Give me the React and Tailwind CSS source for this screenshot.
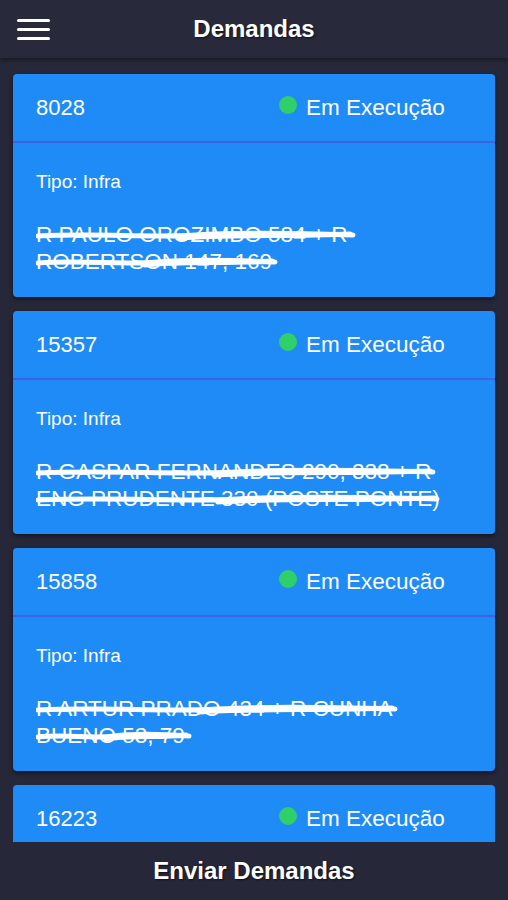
function Scribble({ width, top }) {
  const w = width;
  const d = `M2 6 C ${w * 0.2} 3, ${w * 0.35} 8, ${w * 0.5} 5 S ${w * 0.8} 3, ${w - 3} 5 M${w * 0.45} 8 C ${w * 0.6} 4, ${w * 0.8} 7, ${w - 6} 4`;
  return (
    <svg className="absolute left-0" style={{ top, width: w, height: 12 }} viewBox={`0 0 ${w} 12`} fill="none">
      <path d={d} stroke="white" strokeWidth="5" strokeLinecap="round" />
    </svg>
  );
}

function Header({ id }) {
  return (
    <div className="h-[69px] flex items-center pl-[23px] border-b-2 border-[#3d63e0]">
      <span className="text-white text-[22px] w-[243px]">{id}</span>
      <span className="w-[18px] h-[18px] rounded-full bg-[#2fd06a] -translate-y-[3px]" />
      <span className="text-white text-[22.5px] ml-[9px]">Em Execução</span>
    </div>
  );
}

export default function App() {
  const items = [
    { id: "8028", lines: ["R PAULO OROZIMBO 584 + R", "ROBERTSON 147, 169"], w: [320, 242] },
    { id: "15357", lines: ["R GASPAR FERNANDES 290, 338 + R", "ENG PRUDENTE 330 (POSTE PONTE)"], w: [400, 404] },
    { id: "15858", lines: ["R ARTUR PRADO 434 + R CUNHA", "BUENO 53, 79"], w: [362, 156] },
  ];
  return (
    <div className="h-[900px] w-[508px] bg-[#262738] flex flex-col overflow-hidden" style={{ fontFamily: '"Liberation Sans", Arial, sans-serif' }}>
      <div className="h-[58px] shrink-0 bg-[#282a3c] shadow-[0_2px_4px_rgba(0,0,0,0.35)] relative flex items-center justify-center z-10">
        <div className="absolute left-[17px] top-[19px] flex flex-col gap-[6px]">
          <div className="w-[33px] h-[3px] bg-white rounded-sm" />
          <div className="w-[33px] h-[3px] bg-white rounded-sm" />
          <div className="w-[33px] h-[3px] bg-white rounded-sm" />
        </div>
        <span className="text-white font-bold text-[24px] [text-shadow:1px_1px_2px_rgba(0,0,0,0.6)]">Demandas</span>
      </div>
      <div className="flex-1 overflow-hidden px-[13px] pt-[16px] flex flex-col gap-[14px]">
        {items.map((it) => (
          <div key={it.id} className="bg-[#1e8bf6] rounded-[4px] shadow-[0_2px_4px_rgba(0,0,0,0.5)] shrink-0">
            <Header id={it.id} />
            <div className="pl-[23px] pt-[28px] h-[154px]">
              <div className="text-white text-[19px] leading-[22px]">Tipo: Infra</div>
              <div className="mt-[28px] text-white text-[22.5px] leading-[27px]">
                {it.lines.map((l, i) => (
                  <div key={i} className="relative whitespace-nowrap">
                    {l}
                    <Scribble width={it.w[i]} top={9} />
                  </div>
                ))}
              </div>
            </div>
          </div>
        ))}
        <div className="bg-[#1e8bf6] rounded-[4px] shrink-0">
          <Header id="16223" />
        </div>
      </div>
      <div className="h-[58px] shrink-0 bg-[#262738] flex items-center justify-center z-10">
        <span className="text-white font-bold text-[24px] [text-shadow:1px_1px_2px_rgba(0,0,0,0.6)]">Enviar Demandas</span>
      </div>
    </div>
  );
}
